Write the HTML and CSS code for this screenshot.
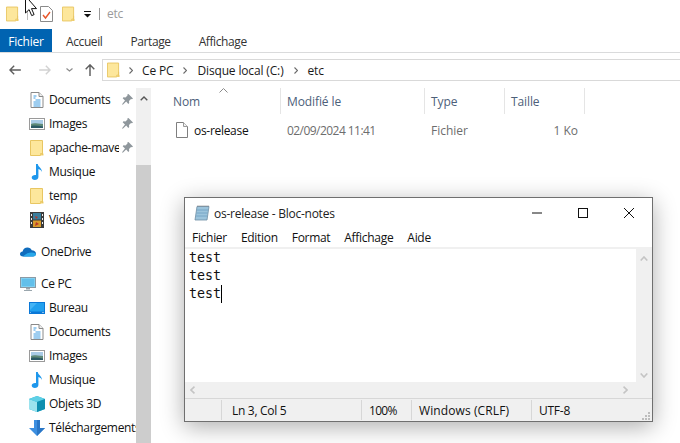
FILE: index.html
```html
<!DOCTYPE html>
<html lang="fr">
<head>
<meta charset="utf-8">
<title>etc</title>
<link rel="stylesheet" href="styles.css">
</head>
<body>
<svg class="defs" width="0" height="0" aria-hidden="true">
  <symbol id="i-folder" viewBox="0 0 14 16"><path d="M.5.5h12v13h-2v2H.5z" fill="#fde79c" stroke="#e8c662"/><path d="M10.5 13.5h3v2h-3z" fill="#f0d070"/><path d="M12.500 10v5" stroke="#e8c662"/></symbol>
  <symbol id="i-doc" viewBox="0 0 13 16"><path d="M.5.5h8l4 4v11H.5z" fill="#fff" stroke="#8a8a8a"/><path d="M8.5.5v4h4" fill="#eee" stroke="#8a8a8a"/><path d="M3 4h3M3 6h2M5 8h5M3 10h7M3 12h7M3 14h7" stroke="#3c9be0"/></symbol>
  <symbol id="i-img" viewBox="0 0 16 12"><rect x=".5" y=".5" width="15" height="11" fill="#fff" stroke="#9a9a9a"/><rect x="2" y="2" width="12" height="4" fill="#a9cbe6"/><path d="M2 6c3-1.500 5-.5 12 0v4H2z" fill="#5f8a78"/><path d="M2 8c4-1 8 0 12 .5V10H2z" fill="#2c5a66"/></symbol>
  <symbol id="i-music" viewBox="0 0 12 16"><path d="M5 0h1.800c.2 3 4.200 3.800 4.200 8-.8-1.800-2-2.600-3.600-3v8c0 2-1.700 3-3.600 3C2 16 .7 15 .7 13.600.7 12 2.300 11 4 11c.4 0 .7 0 1 .1z" fill="#1e97ec"/></symbol>
  <symbol id="i-video" viewBox="0 0 14 16"><rect width="14" height="16" fill="#3b3b3b"/><rect x="3" y="1" width="8" height="6.500" fill="#3a7d9c"/><rect x="3" y="8.500" width="8" height="6.500" fill="#d99a2b"/><path d="M5 4l3 1-2 2zM6 10l3 2-4 2z" fill="#b8382a"/><path d="M1 2h1v2H1zM1 6h1v2H1zM1 10h1v2H1zM12 2h1v2h-1zM12 6h1v2h-1zM12 10h1v2h-1z" fill="#eee"/></symbol>
  <symbol id="i-pin" viewBox="0 0 11 11"><path d="M6.500 0l4.500 4.500-1 .8-1-.3-2 2 .2 2-.9.900-2.100-2.400L.8 10.800 0 10.200l3-3.800L.7 4.200 1.500 3.300l2 .3 2-2-.2-1z" fill="#8f979c"/></symbol>
  <symbol id="i-monitor" viewBox="0 0 16 14"><rect x=".5" y=".5" width="15" height="10" fill="#7fd0f2" stroke="#8b9aa5"/><path d="M2 2h12v7H2z" fill="#62bfea"/><path d="M6 11h4v1.500H6z" fill="#9aa6ad"/><path d="M4 13h8v1H4z" fill="#9aa6ad"/></symbol>
  <symbol id="i-desk" viewBox="0 0 16 12"><rect width="16" height="12" fill="#0a78d7"/><path d="M1 1h14v8.500H1z" fill="#22a0ee"/><path d="M1 1h7L1 8z" fill="#45b4f5"/><path d="M1 10.500h1v.5H1zM13 10.500h2v.5h-2z" fill="#fff"/></symbol>
  <symbol id="i-cube" viewBox="0 0 16 16"><path d="M8 0l8 3v10l-8 3-8-3V3z" fill="#29b5d4"/><path d="M0 3l8 3v10l-8-3z" fill="#9be3ee"/><path d="M8 0l8 3-8 3-8-3z" fill="#5fd0e6"/><path d="M8 6l8-3v10l-8 3z" fill="#0e8fb0"/></symbol>
  <symbol id="i-down" viewBox="0 0 16 16"><path d="M5 0h6v8h5l-8 8-8-8h5z" fill="#3d8fe0"/><path d="M8 0h3v8h5l-8 8z" fill="#2a76c6"/></symbol>
  <symbol id="i-cloud" viewBox="0 0 16 9"><path d="M3 9C1 9 0 8 0 6.500 0 5 1.200 4 2.600 4 3.200 1.600 5 0 7.500 0c2 0 3.500 1 4.200 2.800C14 2.800 16 4.200 16 6.300 16 8 14.800 9 13 9z" fill="#0f6cbd"/><path d="M3 9c4-4 9-5 13-2.700C16 8 14.800 9 13 9z" fill="#28a8ea"/></symbol>
</svg>

<div class="explorer">
  <header class="qat">
    <svg class="ic-folder"><use href="#i-folder"/></svg>
    <span class="qat-sep"></span>
    <svg class="qat-check" viewBox="0 0 13 16" width="13" height="16"><path d="M.5.500h8l4 4v11H.5z" fill="#fff" stroke="#8a8a8a"/><path d="M3 9l2.500 3L10 6" fill="none" stroke="#e8562a" stroke-width="1.400"/></svg>
    <svg class="ic-folder qat-folder2"><use href="#i-folder"/></svg>
    <svg class="qat-drop" viewBox="0 0 7 7" width="7" height="7"><path d="M0 0h7v1H0z" fill="#111"/><path d="M0 3h7L3.500 6.500z" fill="#111"/></svg>
    <span class="qat-bar"></span>
    <span class="qat-title">etc</span>
  </header>

  <nav class="tabs">
    <span class="tab tab-file">Fichier</span>
    <span class="tab">Accueil</span>
    <span class="tab">Partage</span>
    <span class="tab">Affichage</span>
  </nav>

  <div class="addr-row">
    <svg class="nav-ic" viewBox="0 0 14 12" width="12" height="10"><path d="M6 1L1 6l5 5M1 6h13" fill="none" stroke="#5e5e5e" stroke-width="1.700"/></svg>
    <svg class="nav-ic nav-fwd" viewBox="0 0 14 12" width="12" height="10"><path d="M8 1l5 5-5 5M13 6H0" fill="none" stroke="#d2d2d2" stroke-width="1.700"/></svg>
    <svg class="nav-ic nav-caret" viewBox="0 0 7 4" width="7" height="4"><path d="M.5.500l3 2.500 3-2.500" fill="none" stroke="#8c8c8c" stroke-width="1.200"/></svg>
    <svg class="nav-ic nav-up" viewBox="0 0 12 14" width="12" height="12"><path d="M1 6l5-5 5 5M6 1v13" fill="none" stroke="#5e5e5e" stroke-width="1.700"/></svg>
    <div class="addr">
      <svg class="ic-folder"><use href="#i-folder"/></svg>
      <svg class="crumb-sep crumb-first" viewBox="0 0 4 7" width="4" height="7"><path d="M.5.500l3 3-3 3" fill="none" stroke="#6a6a6a" stroke-width="1.100"/></svg>
      <span class="crumb">Ce PC</span>
      <svg class="crumb-sep" viewBox="0 0 4 7" width="4" height="7"><path d="M.5.500l3 3-3 3" fill="none" stroke="#6a6a6a" stroke-width="1.100"/></svg>
      <span class="crumb">Disque local (C:)</span>
      <svg class="crumb-sep" viewBox="0 0 4 7" width="4" height="7"><path d="M.5.500l3 3-3 3" fill="none" stroke="#6a6a6a" stroke-width="1.100"/></svg>
      <span class="crumb">etc</span>
    </div>
  </div>

  <div class="body">
    <aside class="side">
      <ul class="tree">
        <li class="item"><svg class="ic"><use href="#i-doc"/></svg><span class="label">Documents</span><svg class="pin"><use href="#i-pin"/></svg></li>
        <li class="item"><svg class="ic"><use href="#i-img"/></svg><span class="label">Images</span><svg class="pin"><use href="#i-pin"/></svg></li>
        <li class="item"><svg class="ic"><use href="#i-folder"/></svg><span class="label label-cut">apache-maven-3.9.9</span><svg class="pin"><use href="#i-pin"/></svg></li>
        <li class="item"><svg class="ic"><use href="#i-music"/></svg><span class="label">Musique</span></li>
        <li class="item"><svg class="ic"><use href="#i-folder"/></svg><span class="label">temp</span></li>
        <li class="item"><svg class="ic"><use href="#i-video"/></svg><span class="label">Vidéos</span></li>
        <li class="item root item-gap"><svg class="ic"><use href="#i-cloud"/></svg><span class="label">OneDrive</span></li>
        <li class="item root item-gap"><svg class="ic"><use href="#i-monitor"/></svg><span class="label">Ce PC</span></li>
        <li class="item"><svg class="ic"><use href="#i-desk"/></svg><span class="label">Bureau</span></li>
        <li class="item"><svg class="ic"><use href="#i-doc"/></svg><span class="label">Documents</span></li>
        <li class="item"><svg class="ic"><use href="#i-img"/></svg><span class="label">Images</span></li>
        <li class="item"><svg class="ic"><use href="#i-music"/></svg><span class="label">Musique</span></li>
        <li class="item"><svg class="ic"><use href="#i-cube"/></svg><span class="label">Objets 3D</span></li>
        <li class="item"><svg class="ic"><use href="#i-down"/></svg><span class="label">Téléchargements</span></li>
      </ul>
      <div class="side-scroll">
        <svg class="up-arrow" viewBox="0 0 8 5" width="8" height="5"><path d="M.7 4.300L4 1l3.300 3.300" fill="none" stroke="#555" stroke-width="1.400"/></svg>
        <div class="thumb"></div>
      </div>
    </aside>
    <main class="files">
      <svg class="sort" viewBox="0 0 9 5" width="9" height="5"><path d="M.5 4.500l4-4 4 4" fill="none" stroke="#8a8a8a"/></svg>
      <div class="cols">
        <span class="col col-name">Nom</span>
        <span class="col col-date">Modifié le</span>
        <span class="col col-type">Type</span>
        <span class="col col-size">Taille</span>
      </div>
      <div class="file">
        <span class="cell col-name file-name">
          <svg class="file-ic" viewBox="0 0 12 16" width="12" height="16"><path d="M.5.500h7l4 4v11H.5z" fill="#fff" stroke="#7f7f7f"/><path d="M7.500.500v4h4" fill="#f2f2f2" stroke="#9a9a9a"/></svg>
          os-release
        </span>
        <span class="cell col-date date-val">02/09/2024 11:41</span>
        <span class="cell col-type">Fichier</span>
        <span class="cell col-size size-val">1 Ko</span>
      </div>
    </main>
  </div>

  <section class="notepad">
    <div class="np-title">
      <svg class="np-icon" viewBox="0 0 16 16" width="16" height="16"><path d="M3 1.500h12l-2 13.500H1z" fill="#9cc4dc" stroke="#6d8da3" stroke-width=".8"/><path d="M3 5h11M2.600 8h11M2.200 11h11" stroke="#6d9fc0" stroke-width=".8"/><path d="M3.500 1h11" stroke="#777" stroke-width="1.200" stroke-dasharray="1 1"/></svg>
      <span class="np-name">os-release - Bloc-notes</span>
      <div class="np-ctrls">
        <svg class="ctl" viewBox="0 0 46 30" width="46" height="30"><path d="M18 15h10" stroke="#111"/></svg>
        <svg class="ctl" viewBox="0 0 46 30" width="46" height="30"><rect x="18.500" y="10.500" width="9" height="9" fill="none" stroke="#111"/></svg>
        <svg class="ctl" viewBox="0 0 46 30" width="46" height="30"><path d="M18 10l10 10M28 10L18 20" stroke="#111"/></svg>
      </div>
    </div>
    <div class="np-menu">
      <span>Fichier</span><span>Edition</span><span>Format</span><span>Affichage</span><span>Aide</span>
    </div>
    <div class="np-mid">
      <div class="np-text"><div>test</div><div>test</div><div><span class="last-line">test</span></div></div>
      <div class="np-vs">
        <svg viewBox="0 0 8 5" width="8" height="5"><path d="M.7 4.500L4 1l3.300 3.500" fill="none" stroke="#c4c4c4" stroke-width="1.600"/></svg>
        <svg viewBox="0 0 8 5" width="8" height="5"><path d="M.7.500L4 4 7.300.500" fill="none" stroke="#c4c4c4" stroke-width="1.600"/></svg>
      </div>
    </div>
    <div class="np-hs">
      <svg viewBox="0 0 5 8" width="5" height="8"><path d="M4.500.700L1 4l3.500 3.300" fill="none" stroke="#c4c4c4" stroke-width="1.600"/></svg>
      <svg viewBox="0 0 5 8" width="5" height="8"><path d="M.5.700L4 4 .5 7.300" fill="none" stroke="#c4c4c4" stroke-width="1.600"/></svg>
    </div>
    <div class="np-status">
      <span class="st st-0"></span>
      <span class="st st-1">Ln 3, Col 5</span>
      <span class="st st-2">100%</span>
      <span class="st st-3">Windows (CRLF)</span>
      <span class="st st-4">UTF-8</span>
      <svg class="grip" viewBox="0 0 8 8" width="8" height="8"><path d="M6 0h2v2H6zM3 3h2v2H3zM6 3h2v2H6zM0 6h2v2H0zM3 6h2v2H3zM6 6h2v2H6z" fill="#bdbdbd"/></svg>
    </div>
  </section>

  <svg class="cursor" viewBox="0 0 13 19" width="13" height="19"><path d="M.5-4v17l3.600-3.400 2.600 6 2.400-1-2.600-6h5z" fill="#fff" stroke="#111"/></svg>
</div>
</body>
</html>
```

FILE: styles.css
```css
* { box-sizing: border-box; }
html, body { margin: 0; padding: 0; }
body { width: 680px; height: 443px; overflow: hidden; background: #fff; font-family: "Open Sans", "Noto Sans", sans-serif; font-size: 12px; letter-spacing: -.25px; color: #111; }
.defs { position: absolute; }

.explorer { position: relative; width: 680px; height: 443px; overflow: hidden; display: flex; flex-direction: column; }

.qat { height: 29px; display: flex; align-items: center; padding: 0 0 2px 6px; flex: none; }
.ic-folder { width: 13px; height: 16px; flex: none; }
.qat-sep { width: 1px; height: 13px; background: #bcbcbc; margin-left: 8px; }
.qat-check { margin-left: 12px; flex: none; }
.qat-folder2 { margin-left: 9px; }
.qat-drop { margin-left: 9px; margin-top: 2px; flex: none; }
.qat-bar { width: 1px; height: 12px; background: #9a9a9a; margin-left: 8px; }
.qat-title { margin-left: 7px; color: #9b9b9b; }

.tabs { height: 24px; flex: none; display: flex; align-items: center; padding-top: 1px; border-bottom: 1px solid #dadbdc; letter-spacing: -.4px; }
.tab { color: #333; margin-right: 28px; }
.tab-file { background: #0063b1; color: #fff; height: 23px; margin-top: -1px; width: 52px; margin-right: 14px; display: flex; align-items: center; justify-content: center; letter-spacing: -.25px; padding-top: 1px; }

.addr-row { height: 35px; flex: none; display: flex; align-items: center; padding-bottom: 1px; }
.nav-ic { flex: none; margin-left: 9px; }
.nav-fwd { margin-left: 18px; }
.nav-caret { margin-left: 15px; }
.nav-up { margin-left: 11px; }
.addr { flex: 1; height: 22px; margin-left: 6px; border: 1px solid #d9d9d9; border-right: 0; display: flex; align-items: center; padding-left: 4px; color: #1a1a1a; letter-spacing: -.15px; }
.crumb-sep { flex: none; margin-left: 10px; margin-right: 10px; }
.crumb-first { margin-left: 9px; margin-right: 9px; }

.body { flex: 1; display: flex; min-height: 0; }
.side { width: 154px; flex: none; display: flex; }
.tree { width: 136px; list-style: none; margin: 0; padding: 0; overflow: hidden; letter-spacing: -.32px; }
.item { height: 24px; display: flex; align-items: center; position: relative; padding-left: 29px; white-space: nowrap; }
.item .ic { width: 16px; height: 16px; flex: none; }
.label { margin-left: 4px; margin-top: -1px; color: #111; flex: none; }
.label-cut { width: 70px; overflow: hidden; }
.root { padding-left: 20px; }
.root .label { margin-left: 5px; }
.item-gap { margin-top: 8px; }
.pin { width: 11px; height: 11px; position: absolute; left: 122px; top: 6px; }
.side-scroll { width: 15px; background: #f0f0f0; position: relative; display: flex; flex-direction: column; align-items: center; }
.up-arrow { margin-top: 8px; flex: none; }
.thumb { position: absolute; left: 0; right: 0; top: 77px; bottom: 0; background: #cdcdcd; }

.files { flex: 1; position: relative; }
.sort { position: absolute; left: 65px; top: 0; }
.cols { display: flex; height: 26px; align-items: center; color: #4c607a; letter-spacing: -.1px; }
.col, .cell { flex: none; padding-left: 6px; }
.col { height: 26px; display: flex; align-items: center; border-right: 1px solid #e5e5e5; }
.col-name { width: 127px; padding-left: 19px; }
.col-date { width: 144px; }
.col-type { width: 80px; }
.col-size { width: 80px; }
.file { display: flex; height: 24px; align-items: center; margin-top: 4px; color: #6d6d6d; letter-spacing: 0; }
.file-name { display: flex; align-items: center; color: #111; padding-left: 22px; letter-spacing: -.3px; }
.file-ic { margin-right: 6px; flex: none; }
.date-val { letter-spacing: -.55px; }
.size-val { text-align: right; padding-right: 7px; }

.notepad { position: absolute; left: 184px; top: 197px; width: 469px; height: 225px; background: #fff; border: 1px solid #6f6f6f; box-shadow: 0 5px 22px rgba(0,0,0,.32); display: flex; flex-direction: column; }
.np-title { height: 30px; flex: none; display: flex; align-items: center; padding-left: 9px; color: #222; }
.np-icon { flex: none; }
.np-name { margin-left: 4px; }
.np-ctrls { margin-left: auto; display: flex; }
.ctl { flex: none; }
.np-menu { height: 19px; flex: none; display: flex; align-items: center; padding-left: 7px; gap: 14px; color: #111; letter-spacing: -.3px; }
.np-mid { flex: 1; display: flex; min-height: 0; border-top: 2px solid #f0f0f0; }
.np-text { flex: 1; padding: 0 0 0 4px; font-family: "DejaVu Sans Mono", monospace; font-size: 13.33px; letter-spacing: 0; line-height: 18px; color: #111; }
.last-line { border-right: 1px solid #000; display: inline-block; height: 18px; }
.np-vs { width: 16px; flex: none; background: #f0f0f0; display: flex; flex-direction: column; justify-content: space-between; align-items: center; padding: 7px 0 4px; }
.np-hs { height: 16px; flex: none; background: #f0f0f0; display: flex; justify-content: space-between; align-items: center; padding: 0 24px 0 5px; }
.np-status { height: 23px; flex: none; background: #f0f0f0; border-top: 1px solid #d7d7d7; display: flex; align-items: center; position: relative; color: #111; }
.st { height: 20px; display: flex; align-items: center; border-right: 1px solid #d7d7d7; flex: none; padding-left: 10px; }
.st-0 { width: 37px; }
.st-1 { width: 140px; letter-spacing: -.3px; }
.st-2 { width: 50px; padding-left: 7px; letter-spacing: -.7px; }
.st-3 { width: 120px; padding-left: 7px; letter-spacing: .1px; }
.st-4 { border-right: 0; padding-left: 7px; }
.grip { position: absolute; right: 2px; bottom: 1px; }

.cursor { position: absolute; left: 25px; top: 0; }
```
